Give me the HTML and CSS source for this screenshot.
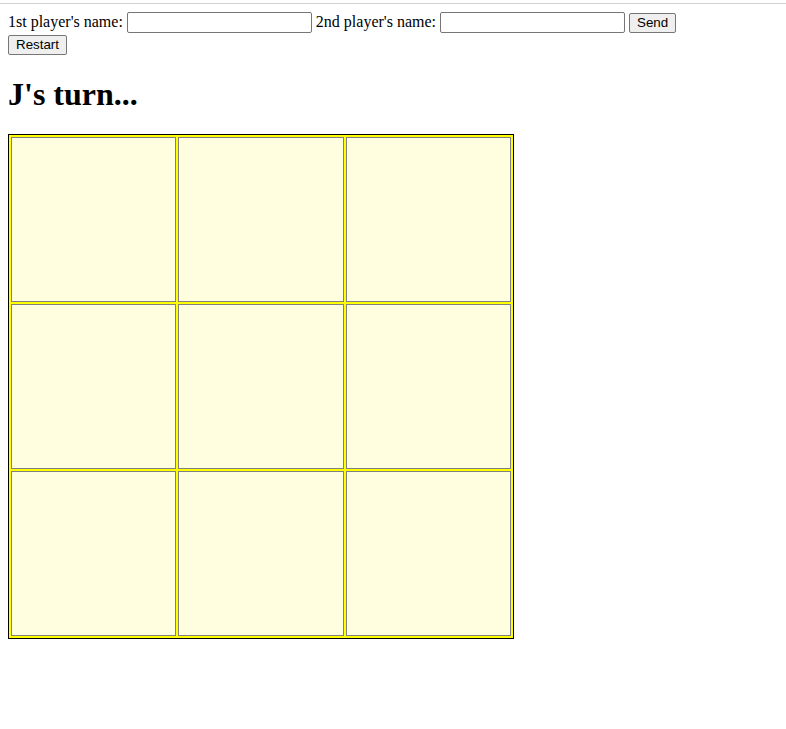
FILE: index.html
```html
<!DOCTYPE html>
<html>
<head>
<meta charset="utf-8">
<title>Tic Tac Toe</title>
<link rel="stylesheet" href="styles.css">
</head>
<body>
<div class="topline"></div>
<div class="page">
  <form class="names">
    <label>1st player's name: <input type="text" class="name-input"></label>
    <label>2nd player's name: <input type="text" class="name-input"></label>
    <button type="button" class="btn">Send</button><br>
    <button type="button" class="btn">Restart</button>
  </form>
  <h1 class="turn">J's turn...</h1>
  <table class="board">
    <tr><td></td><td></td><td></td></tr>
    <tr><td></td><td></td><td></td></tr>
    <tr><td></td><td></td><td></td></tr>
  </table>
</div>
</body>
</html>
```
FILE: styles.css
```css
html, body {
  margin: 0;
  padding: 0;
  background: #fff;
}
body {
  font-family: "Liberation Serif", "Times New Roman", serif;
  font-size: 16px;
  color: #000;
}
.topline {
  margin-top: 3px;
  border-top: 1px solid #d0d0d0;
}
.page {
  padding: 7px 8px 0;
}
.names {
  margin: 0;
  line-height: 21px;
}
.name-input {
  box-sizing: border-box;
  font-family: "Liberation Sans", Arial, sans-serif;
  font-size: 13.333px;
  width: 185px;
  height: 21px;
  padding: 1px 2px;
  border: 1px solid #767676;
  border-radius: 2px;
  vertical-align: baseline;
}
.btn {
  box-sizing: border-box;
  font-family: "Liberation Sans", Arial, sans-serif;
  font-size: 13.333px;
  height: 20px;
  padding: 1px 7px;
  border: 1px solid #767676;
  border-radius: 2px;
  background: #efefef;
  color: #000;
}
.turn {
  font-size: 32px;
  font-weight: bold;
  margin: 21.44px 0;
}
.board {
  border: 1px solid #000;
  background: #ffff00;
  border-spacing: 2px;
}
.board td {
  width: 163.34px;
  height: 163px;
  padding: 0;
  border: 1px solid #808080;
  background: #ffffe0;
}
```
